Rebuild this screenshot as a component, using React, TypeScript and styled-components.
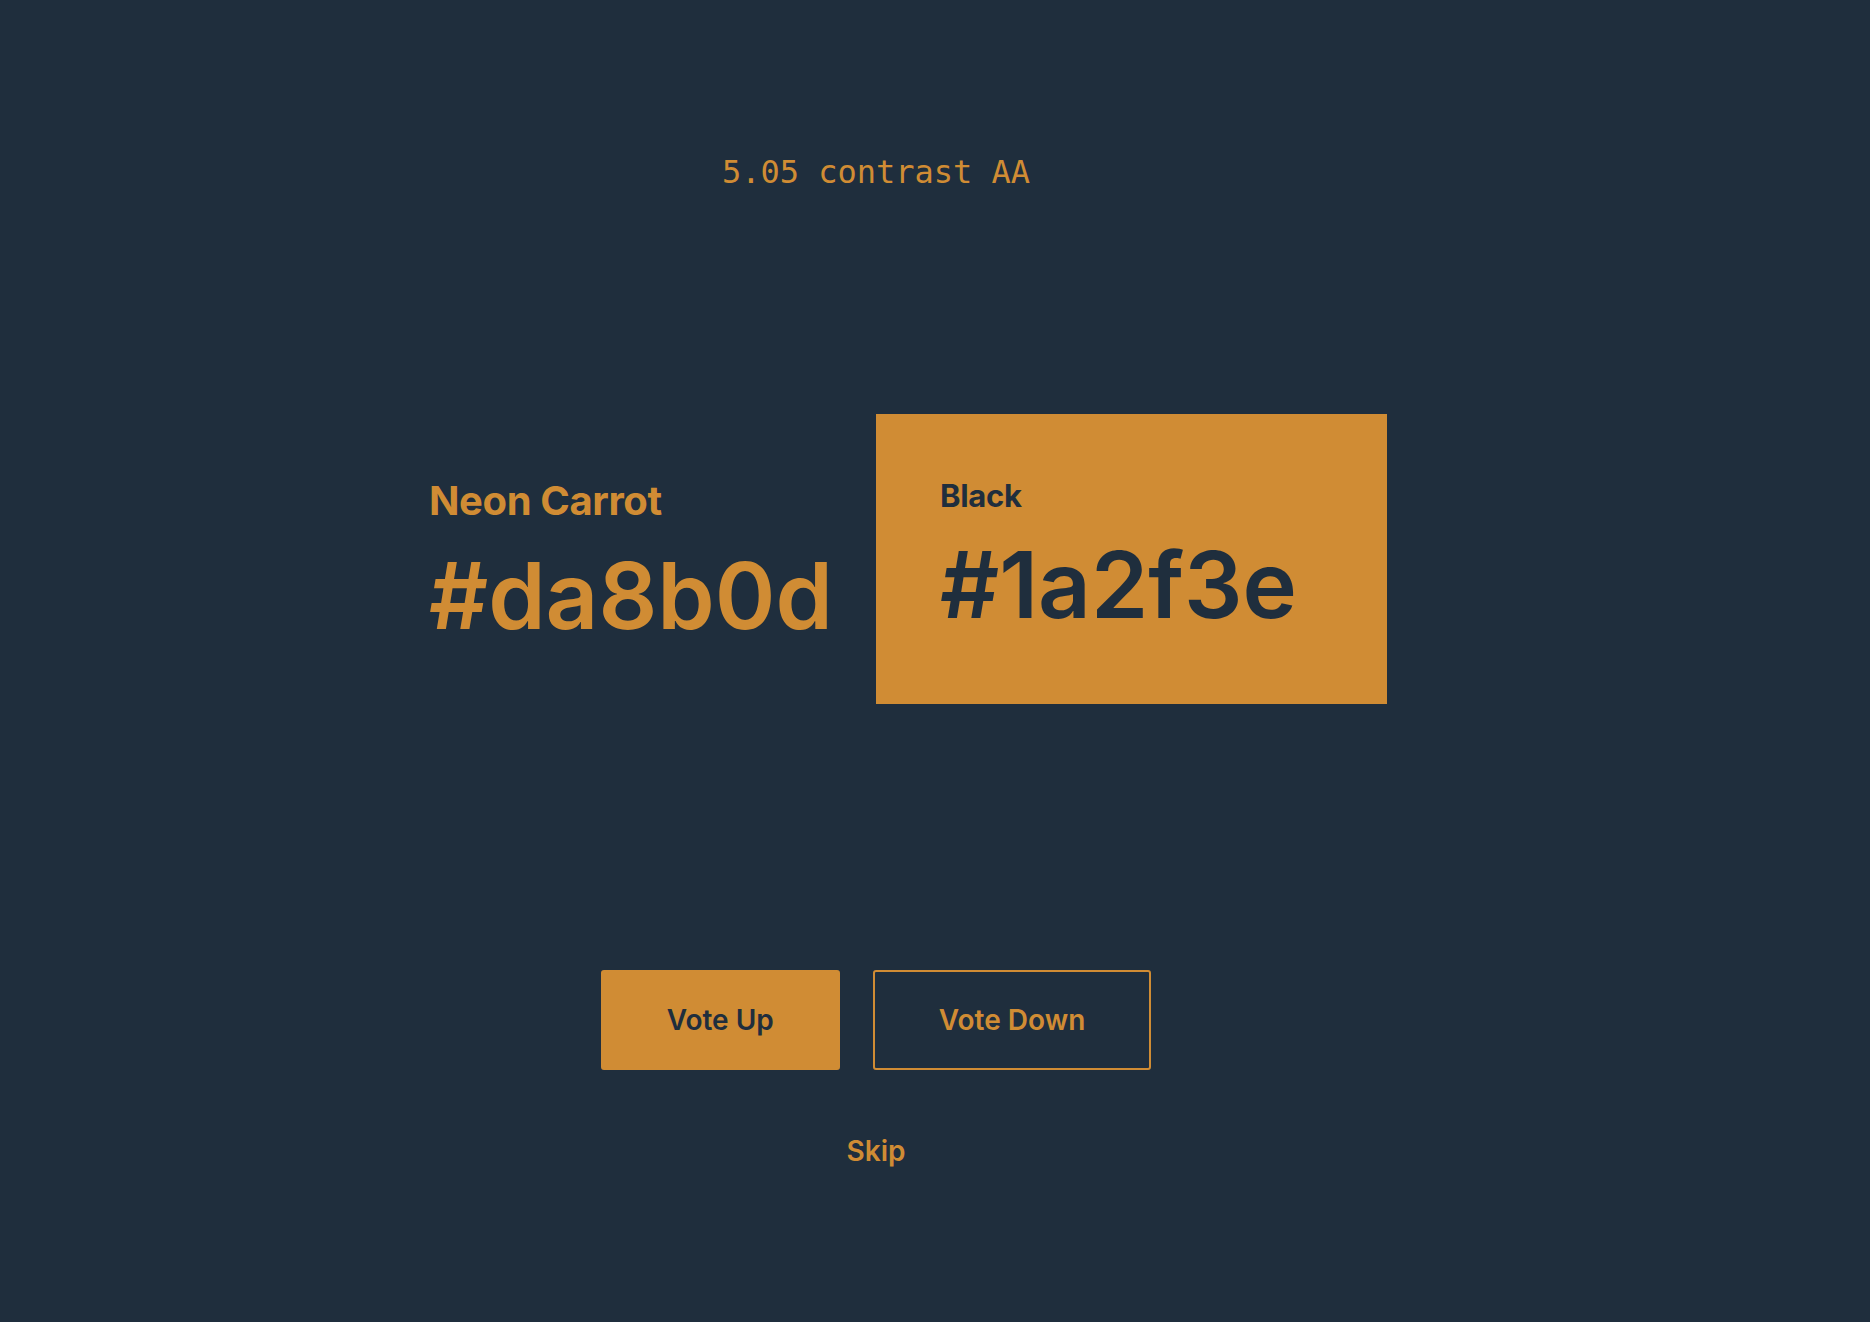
import React from "react";
import styled, { createGlobalStyle } from "styled-components";

const ORANGE = "#d08c34";
const NAVY = "#1f2e3d";

const Global = createGlobalStyle`
  html, body {
    margin: 0;
    padding: 0;
    background: ${NAVY};
  }
  body {
    font-family: Inter, "Liberation Sans", sans-serif;
  }
`;

const Page = styled.main`
  width: 1752px;
  min-height: 1322px;
  box-sizing: border-box;
  padding-top: 153px;
  display: flex;
  flex-direction: column;
  align-items: center;
`;

const Score = styled.div`
  font-family: "DejaVu Sans Mono", "Liberation Mono", monospace;
  font-size: 32px;
  line-height: 38px;
  color: ${ORANGE};
  margin-bottom: 223px;
`;

const Pair = styled.section`
  display: flex;
  margin-bottom: 266px;
`;

const Swatch = styled.div<{ $filled?: boolean; $shift?: number }>`
  width: 511px;
  height: 290px;
  box-sizing: border-box;
  padding: ${(p) => Math.max(0, p.$shift ?? 0)}px 64px
    ${(p) => Math.max(0, -(p.$shift ?? 0))}px;
  display: flex;
  flex-direction: column;
  justify-content: center;
  background: ${(p) => (p.$filled ? ORANGE : "transparent")};
  color: ${(p) => (p.$filled ? NAVY : ORANGE)};
`;

const Name = styled.div<{ $size: number }>`
  font-size: ${(p) => p.$size}px;
  font-weight: 700;
  line-height: 1.2;
  letter-spacing: -0.01em;
`;

const Hex = styled.div<{ $gap: number }>`
  font-size: 92px;
  font-weight: 600;
  line-height: 1.15;
  letter-spacing: 0;
  margin-top: ${(p) => p.$gap}px;
`;

const Actions = styled.div`
  display: flex;
  gap: 33px;
  margin-bottom: 64px;
`;

const Button = styled.button<{ $primary?: boolean }>`
  height: 100px;
  padding: 0 64px;
  box-sizing: border-box;
  border-radius: 3px;
  border: 2px solid ${ORANGE};
  background: ${(p) => (p.$primary ? ORANGE : "transparent")};
  color: ${(p) => (p.$primary ? NAVY : ORANGE)};
  font-family: Inter, "Liberation Sans", sans-serif;
  font-size: 28px;
  font-weight: 600;
  cursor: pointer;
`;

const Skip = styled.button`
  background: none;
  border: none;
  padding: 0;
  color: ${ORANGE};
  font-family: Inter, "Liberation Sans", sans-serif;
  font-size: 28px;
  font-weight: 600;
  line-height: 34px;
  cursor: pointer;
`;

export default function App() {
  return (
    <>
      <Global />
      <Page>
        <Score>5.05 contrast AA</Score>
        <Pair>
          <Swatch $shift={8}>
            <Name $size={40}>Neon Carrot</Name>
            <Hex $gap={18}>#da8b0d</Hex>
          </Swatch>
          <Swatch $filled $shift={-4}>
            <Name $size={31}>Black</Name>
            <Hex $gap={18}>#1a2f3e</Hex>
          </Swatch>
        </Pair>
        <Actions>
          <Button $primary>Vote Up</Button>
          <Button>Vote Down</Button>
        </Actions>
        <Skip>Skip</Skip>
      </Page>
    </>
  );
}
